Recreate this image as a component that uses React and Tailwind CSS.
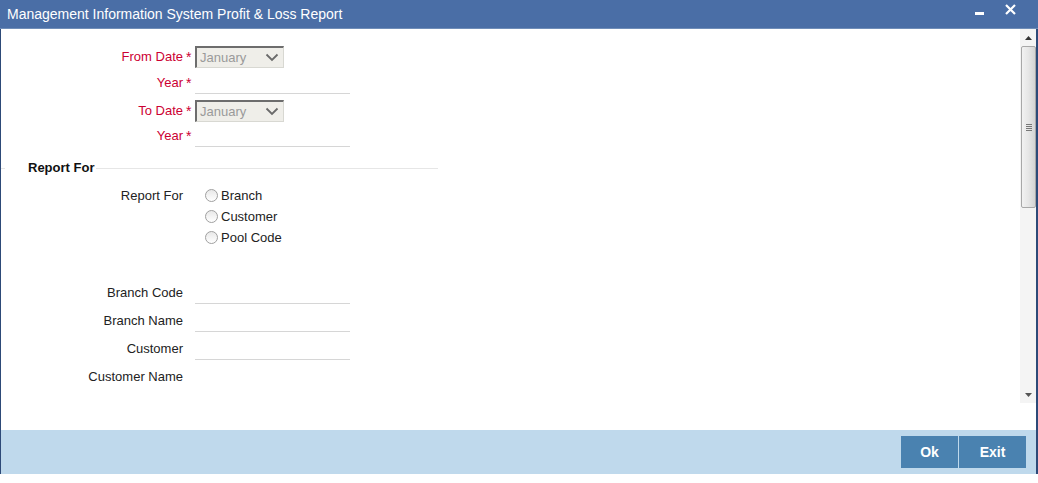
import React from 'react';

const font = { fontFamily: '"Liberation Sans", Arial, sans-serif' };

const Req = () => <span className="w-[12px] text-[#cc0033] text-[14px] leading-none pl-[3px]">*</span>;

const Label = ({ children, red }) => (
  <div className={`w-[182px] text-right text-[13px] ${red ? 'text-[#cc0033]' : 'text-[#222]'}`}>{children}</div>
);

const MonthSelect = () => (
  <div className="w-[89px] h-[22px] flex items-center justify-between bg-[#efeee9] border-t-2 border-l-2 border-t-[#6d6d6d] border-l-[#6d6d6d] border-b border-r border-b-[#d8d8d2] border-r-[#d8d8d2] pl-[3px] pr-[4px]">
    <span className="text-[13px] text-[#9a9a9a]">January</span>
    <svg width="14" height="9" viewBox="0 0 14 9">
      <path d="M1.5 1.5 L7 7 L12.5 1.5" fill="none" stroke="#6a6a6a" strokeWidth="1.8" />
    </svg>
  </div>
);

const Line = () => <div className="w-[155px] h-[22px] border-b border-[#d6d6d6]" />;

const Radio = ({ label }) => (
  <div className="h-[21px] flex items-center">
    <span className="w-[13px] h-[13px] rounded-full border border-[#a0a0a0] bg-gradient-to-b from-[#e8e8e8] to-white" />
    <span className="ml-[3px] text-[13px] text-[#222]">{label}</span>
  </div>
);

export default function App() {
  return (
    <div className="w-[1038px] h-[483px] bg-white" style={font}>
      <div className="w-[1038px] h-[474px] flex flex-col border-l border-r-2 border-[#2d4a78]">
        {/* title bar */}
        <div className="h-[29px] -ml-px -mr-[2px] bg-[#4a6ea6] border-b border-[#6f8db8] flex items-center px-[7px]">
          <span className="text-white text-[14px]">Management Information System Profit &amp; Loss Report</span>
          <div className="ml-auto flex items-start gap-[21px] pr-[15px] h-full pt-[4px]">
            <div className="w-[9px] h-[3px] bg-white mt-[8px]" />
            <svg width="11" height="11" viewBox="0 0 11 11">
              <path d="M1 1 L10 10 M10 1 L1 10" stroke="white" strokeWidth="2.2" />
            </svg>
          </div>
        </div>

        {/* body */}
        <div className="flex-1 flex min-h-0">
          <div className="flex-1 pt-[17px]">
            <div className="flex items-center h-[22px]">
              <Label red>From Date</Label><Req /><MonthSelect />
            </div>
            <div className="flex items-center h-[22px] mt-[4px]">
              <Label red>Year</Label><Req /><Line />
            </div>
            <div className="flex items-center h-[22px] mt-[6px]">
              <Label red>To Date</Label><Req /><MonthSelect />
            </div>
            <div className="flex items-center h-[22px] mt-[3px]">
              <Label red>Year</Label><Req /><Line />
            </div>

            <div className="w-[437px] h-[16px] mt-[13px] flex items-center">
              <div className="w-[4px] h-px bg-[#e6e6e6]" />
              <span className="ml-[23px] pr-[2px] text-[13px] font-bold text-[#111]">Report For</span>
              <div className="flex-1 h-px bg-[#e6e6e6]" />
            </div>

            <div className="flex mt-[9px]">
              <div className="h-[21px] flex items-center"><Label>Report For</Label></div>
              <div className="ml-[22px]">
                <Radio label="Branch" />
                <Radio label="Customer" />
                <Radio label="Pool Code" />
              </div>
            </div>

            <div className="flex items-center h-[22px] mt-[34px]">
              <Label>Branch Code</Label><span className="w-[12px]" /><Line />
            </div>
            <div className="flex items-center h-[22px] mt-[6px]">
              <Label>Branch Name</Label><span className="w-[12px]" /><Line />
            </div>
            <div className="flex items-center h-[22px] mt-[6px]">
              <Label>Customer</Label><span className="w-[12px]" /><Line />
            </div>
            <div className="flex items-center h-[22px] mt-[6px]">
              <Label>Customer Name</Label>
            </div>
          </div>

          {/* scrollbar */}
          <div className="w-[16px] h-[374px] bg-[#f4f4f4] flex flex-col items-center">
            <div className="h-[17px] w-full flex items-center justify-center">
              <svg width="7" height="4" viewBox="0 0 7 4"><path d="M0 4 L3.5 0 L7 4 Z" fill="#333" /></svg>
            </div>
            <div className="w-[15px] h-[162px] ml-px border border-[#a8a8a8] rounded-[2px] bg-gradient-to-r from-[#f2f2f2] via-[#e6e6e6] to-[#d4d4d4] flex items-center justify-center">
              <div className="flex flex-col gap-px">
                <div className="w-[6px] h-px bg-[#777]" />
                <div className="w-[6px] h-px bg-[#777]" />
                <div className="w-[6px] h-px bg-[#777]" />
                <div className="w-[6px] h-px bg-[#777]" />
              </div>
            </div>
            <div className="flex-1" />
            <div className="h-[17px] w-full flex items-center justify-center">
              <svg width="7" height="4" viewBox="0 0 7 4"><path d="M0 0 L7 0 L3.5 4 Z" fill="#555" /></svg>
            </div>
          </div>
        </div>

        {/* footer */}
        <div className="h-[44px] bg-[#bfd9ec] flex items-center justify-end pr-[10px]">
          <button className="w-[57px] h-[32px] bg-[#4a82b0] text-white text-[14px] font-bold">Ok</button>
          <button className="w-[67px] h-[32px] ml-px bg-[#4a82b0] text-white text-[14px] font-bold">Exit</button>
        </div>
      </div>
    </div>
  );
}
